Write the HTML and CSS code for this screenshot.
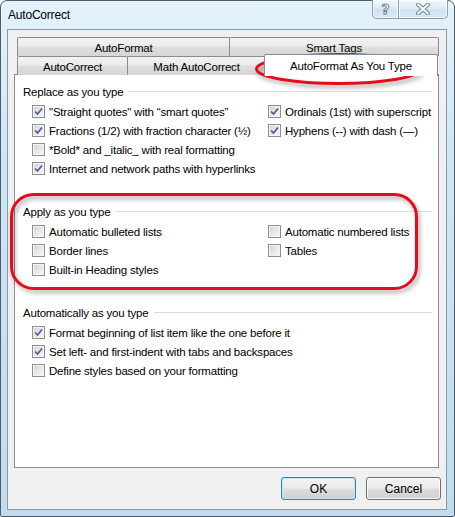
FILE: index.html
```html
<!DOCTYPE html>
<html lang="en">
<head>
    <meta charset="UTF-8">
    <title>AutoCorrect</title>
    <link rel="stylesheet" href="styles.css">
</head>
<body>
<div class="screen">
    <div class="window">
        <div class="titlebar">
            <span class="title">AutoCorrect</span>
            <div class="caption">
                <span class="cap help">?</span>
                <span class="cap close">
                    <svg width="14" height="12" viewBox="0 0 14 12">
                        <path d="M2 1.5 L12 10.5 M12 1.5 L2 10.5" stroke="#76869a" stroke-width="4" stroke-linecap="round"/>
                        <path d="M2 1.5 L12 10.5 M12 1.5 L2 10.5" stroke="#f7fafc" stroke-width="2" stroke-linecap="round"/>
                    </svg>
                </span>
            </div>
        </div>

        <div class="client">
            <div class="tabs">
                <div class="tab-row">
                    <div class="tab w-af">AutoFormat</div>
                    <div class="tab w-st">Smart Tags</div>
                </div>
                <div class="tab-row">
                    <div class="tab w-ac">AutoCorrect</div>
                    <div class="tab w-math">Math AutoCorrect</div>
                    <div class="tab active">AutoFormat As You Type</div>
                </div>
            </div>

            <div class="panel">
                <!-- Replace as you type -->
                <div class="section">
                    <div class="legend">Replace as you type</div>
                    <div class="cols">
                        <div class="col left">
                            <label class="row"><span class="cb checked"><svg viewBox="0 0 11 11"><path d="M2 5.5 L4.5 8 L9 2.5"/></svg></span>"Straight quotes" with “smart quotes”</label>
                            <label class="row"><span class="cb checked"><svg viewBox="0 0 11 11"><path d="M2 5.5 L4.5 8 L9 2.5"/></svg></span>Fractions (1/2) with fraction character (½)</label>
                            <label class="row"><span class="cb"></span>*Bold* and _italic_ with real formatting</label>
                            <label class="row"><span class="cb checked"><svg viewBox="0 0 11 11"><path d="M2 5.5 L4.5 8 L9 2.5"/></svg></span>Internet and network paths with hyperlinks</label>
                        </div>
                        <div class="col">
                            <label class="row"><span class="cb checked"><svg viewBox="0 0 11 11"><path d="M2 5.5 L4.5 8 L9 2.5"/></svg></span>Ordinals (1st) with superscript</label>
                            <label class="row"><span class="cb checked"><svg viewBox="0 0 11 11"><path d="M2 5.5 L4.5 8 L9 2.5"/></svg></span>Hyphens (--) with dash (—)</label>
                        </div>
                    </div>
                </div>

                <!-- Apply as you type -->
                <div class="section">
                    <div class="legend">Apply as you type</div>
                    <div class="cols">
                        <div class="col left">
                            <label class="row"><span class="cb"></span>Automatic bulleted lists</label>
                            <label class="row"><span class="cb"></span>Border lines</label>
                            <label class="row"><span class="cb"></span>Built-in Heading styles</label>
                        </div>
                        <div class="col">
                            <label class="row"><span class="cb"></span>Automatic numbered lists</label>
                            <label class="row"><span class="cb"></span>Tables</label>
                        </div>
                    </div>
                </div>

                <!-- Automatically as you type -->
                <div class="section">
                    <div class="legend">Automatically as you type</div>
                    <div class="cols">
                        <div class="col">
                            <label class="row"><span class="cb checked"><svg viewBox="0 0 11 11"><path d="M2 5.5 L4.5 8 L9 2.5"/></svg></span>Format beginning of list item like the one before it</label>
                            <label class="row"><span class="cb checked"><svg viewBox="0 0 11 11"><path d="M2 5.5 L4.5 8 L9 2.5"/></svg></span>Set left- and first-indent with tabs and backspaces</label>
                            <label class="row"><span class="cb"></span>Define styles based on your formatting</label>
                        </div>
                    </div>
                </div>
            </div>

            <div class="buttons">
                <button class="btn default">OK</button>
                <button class="btn">Cancel</button>
            </div>
        </div>
    </div>

    <!-- red annotation marks drawn over the screenshot -->
    <svg class="marks" width="455" height="517" viewBox="0 0 455 517">
        <defs>
            <filter id="sh" x="-10%" y="-30%" width="120%" height="160%">
                <feDropShadow dx="2" dy="3" stdDeviation="2" flood-color="#000" flood-opacity="0.35"/>
            </filter>
        </defs>
        <ellipse cx="338.5" cy="69" rx="82" ry="14.5" fill="none" stroke="#e5101c" stroke-width="3" filter="url(#sh)"/>
        <rect x="11.5" y="194.5" width="405" height="94" rx="22" ry="22" fill="none" stroke="#e5101c" stroke-width="3" filter="url(#sh)"/>
    </svg>
</div>
</body>
</html>
```

FILE: styles.css
```css
body {
    margin: 0;
    font-family: "Liberation Sans", Arial, sans-serif;
    font-size: 11.5px;
    letter-spacing: -0.2px;
    color: #000;
    background: #fff;
}
.screen {
    position: relative;
    width: 455px;
    height: 517px;
}
.window {
    width: 455px;
    height: 517px;
    box-sizing: border-box;
    border: 1px solid #4f5b66;
    border-radius: 7px 7px 2px 2px;
    padding: 0 7px 6px 6px;
    background: linear-gradient(to bottom, #e4f3fc 0%, #cfe6f6 30%, #c2dbee 100%);
    display: flex;
    flex-direction: column;
}
.titlebar {
    height: 28px;
    display: flex;
    justify-content: space-between;
    align-items: flex-start;
}
.title {
    padding: 6px 0 0 1px;
    line-height: 16px;
    font-size: 12px;
}
.caption {
    display: flex;
    margin-top: -1px;
    margin-right: -1px;
}
.cap {
    height: 19px;
    box-sizing: border-box;
    border: 1px solid #8d9cab;
    border-top: none;
    display: flex;
    align-items: center;
    justify-content: center;
    background: linear-gradient(to bottom, #f2f8fc, #dbeaf5 50%, #cfe2f0 50%, #d9eaf6);
    box-shadow: inset 0 0 0 1px rgba(255, 255, 255, 0.7);
}
.help {
    width: 27px;
    border-radius: 0 0 0 5px;
    font-family: "DejaVu Sans", sans-serif;
    font-weight: bold;
    font-size: 14px;
    color: #f7fafc;
    -webkit-text-stroke: 1px #76869a;
}
.close {
    width: 49px;
    border-left: none;
    border-radius: 0 0 5px 0;
}
.client {
    flex: 1;
    box-sizing: border-box;
    background: #f0f0f0;
    border: 1px solid #8b9aa8;
    padding: 7px 0 0 6px;
}
.tabs {
    margin-left: 3px;
    margin-bottom: -1px;
}
.tab-row {
    display: flex;
    height: 19px;
}
.tab {
    box-sizing: border-box;
    height: 19px;
    border: 1px solid #898c95;
    border-bottom: none;
    border-radius: 2px 2px 0 0;
    background: linear-gradient(to bottom, #f3f3f3 0%, #ebebeb 45%, #dedede 50%, #d6d6d6 100%);
    text-align: center;
    line-height: 21px;
}
.tab + .tab {
    margin-left: -1px;
}
.w-af { width: 213px; }
.w-st { width: 210px; }
.w-ac { width: 111px; }
.w-math { width: 139px; }
.tab.active {
    position: relative;
    z-index: 1;
    width: 174px;
    height: 22px;
    margin-top: -2px;
    margin-left: -2px;
    background: #fff;
    line-height: 23px;
}
.panel {
    width: 425px;
    height: 394px;
    box-sizing: border-box;
    background: #fff;
    border: 1px solid #898c95;
    padding: 7px 6px 0 8px;
}
.section + .section {
    margin-top: 24px;
}
.legend {
    display: flex;
    align-items: center;
    height: 19px;
}
.legend::after {
    content: "";
    flex: 1;
    height: 1px;
    margin-left: 6px;
    background: #d5dfe5;
}
.cols {
    display: flex;
    margin-top: 1px;
}
.col {
    display: flex;
    flex-direction: column;
}
.col.left {
    width: 236px;
}
.row {
    display: flex;
    align-items: center;
    height: 19px;
    white-space: nowrap;
}
.cb {
    width: 13px;
    height: 13px;
    box-sizing: border-box;
    margin: 0 4px 0 9px;
    border: 1px solid #8e8f8f;
    background: linear-gradient(135deg, #cfd2d6 0%, #e8e9ea 55%, #f8f8f8 100%);
    box-shadow: inset 0 0 0 1px #f4f4f4;
    flex-shrink: 0;
}
.cb svg {
    display: block;
    width: 11px;
    height: 11px;
}
.cb svg path {
    fill: none;
    stroke: #4a5f8c;
    stroke-width: 1.7;
}
.buttons {
    display: flex;
    justify-content: flex-end;
    gap: 10px;
    width: 427px;
    margin-top: 9px;
}
.btn {
    width: 75px;
    height: 23px;
    font-family: inherit;
    font-size: 12px;
    letter-spacing: 0;
    color: #000;
    border: 1px solid #707070;
    border-radius: 3px;
    background: linear-gradient(to bottom, #f2f2f2 0%, #ebebeb 48%, #dddddd 52%, #cfcfcf 100%);
    box-shadow: inset 0 0 0 1px rgba(255, 255, 255, 0.8);
    padding: 0;
}
.btn.default {
    border-color: #3c7fb1;
    box-shadow: inset 0 0 0 1px #c4e5f6;
}
.marks {
    position: absolute;
    top: 0;
    left: 0;
    pointer-events: none;
}
```
